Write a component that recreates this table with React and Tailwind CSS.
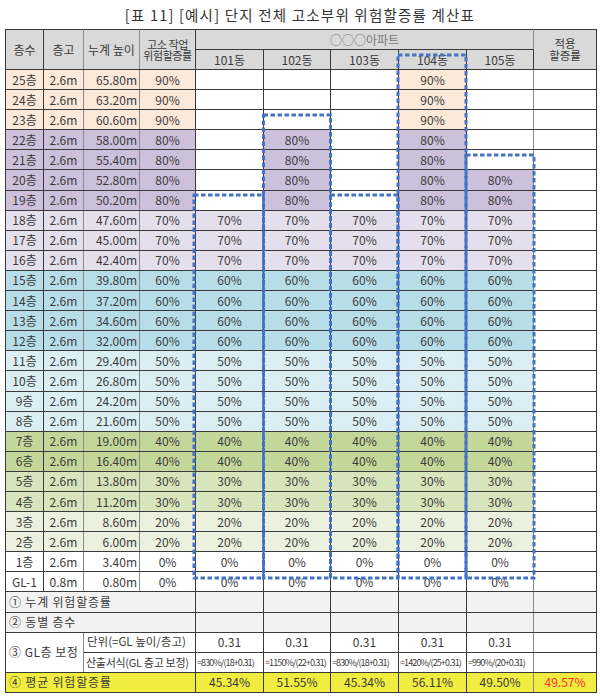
import React from "react";

const BAND = {
  90: "bg-[#fde9d9]",
  80: "bg-[#ccc0da]",
  70: "bg-[#e4dfec]",
  60: "bg-[#b7dee8]",
  50: "bg-[#daeef3]",
  40: "bg-[#c4d79b]",
  30: "bg-[#d8e4bc]",
  20: "bg-[#ebf1de]",
  0: "bg-white",
};

const riskOf = (f) => {
  if (f >= 23) return 90;
  if (f >= 19) return 80;
  if (f >= 16) return 70;
  if (f >= 12) return 60;
  if (f >= 8) return 50;
  if (f >= 6) return 40;
  if (f >= 4) return 30;
  if (f >= 2) return 20;
  return 0;
};

const heights = [18, 22, 18, 25, 20];

const floors = [];
for (let f = 25; f >= 1; f--) {
  floors.push({
    label: `${f}층`,
    h: "2.6m",
    cum: `${(0.8 + 2.6 * f).toFixed(2)}m`,
    risk: riskOf(f),
    f,
  });
}
floors.push({ label: "GL-1", h: "0.8m", cum: "0.80m", risk: 0, f: 0 });

const formulas = [
  "=830%/(18+0.31)",
  "=1150%/(22+0.31)",
  "=830%/(18+0.31)",
  "=1420%/(25+0.31)",
  "=990%/(20+0.31)",
];
const averages = ["45.34%", "51.55%", "45.34%", "56.11%", "49.50%"];

const cell = "border border-[#3a3a3a] p-0 leading-none whitespace-nowrap overflow-hidden";
const grayR = "border-r-[#8a8a8a]";

const boxes = [
  { x: 194, y: 195, w: 69.5, h: 383 },
  { x: 263.5, y: 115, w: 67, h: 463 },
  { x: 330.5, y: 195, w: 67.5, h: 383 },
  { x: 398, y: 55, w: 68, h: 523 },
  { x: 466, y: 155, w: 68, h: 423 },
];

export default function App() {
  return (
    <div
      className="relative w-[600px] h-[697px] overflow-hidden bg-white text-[#3b3b3b]"
      style={{ fontFamily: '"Noto Sans CJK KR", "Noto Sans", sans-serif' }}
    >
      <div className="h-[29px] flex items-center justify-center text-[14.5px] tracking-[1.2px] text-[#333]">
        [표 11] [예시] 단지 전체 고소부위 위험할증률 계산표
      </div>
      <table className="ml-[5px] w-[591px] table-fixed border-collapse text-[12px]">
        <colgroup>
          <col className="w-[38px]" />
          <col className="w-[40px]" />
          <col className="w-[56px]" />
          <col className="w-[56px]" />
          <col className="w-[68px]" />
          <col className="w-[67px]" />
          <col className="w-[68px]" />
          <col className="w-[68px]" />
          <col className="w-[67px]" />
          <col className="w-[63px]" />
        </colgroup>
        <thead>
          <tr className="h-[20px] bg-[#d9d9d9]">
            <th rowSpan={2} className={`${cell} font-normal text-center`}>층수</th>
            <th rowSpan={2} className={`${cell} ${grayR} font-normal text-center`}>층고</th>
            <th rowSpan={2} className={`${cell} ${grayR} font-normal text-center`}>누계 높이</th>
            <th rowSpan={2} className={`${cell} font-normal text-center text-[11px] tracking-[-0.4px] leading-[14px]`}>
              고소 작업
              <br />
              위험할증률
            </th>
            <th colSpan={5} className={`${cell} ${grayR} font-normal text-center text-[#7a7a7a]`}>○○○아파트</th>
            <th rowSpan={2} className={`${cell} font-normal text-center text-[11.5px] leading-[14px]`}>
              적용
              <br />
              할증률
            </th>
          </tr>
          <tr className="h-[20px] bg-[#d9d9d9]">
            {["101동", "102동", "103동", "104동", "105동"].map((b, i) => (
              <th key={b} className={`${cell} ${i === 4 ? grayR : ""} font-normal text-center`}>{b}</th>
            ))}
          </tr>
        </thead>
        <tbody>
          {floors.map((r) => {
            const bg = BAND[r.risk];
            return (
              <tr key={r.label} className="h-[20.1px]">
                <td className={`${cell} ${bg} text-center`}>{r.label}</td>
                <td className={`${cell} ${grayR} ${bg} text-center`}>{r.h}</td>
                <td className={`${cell} ${grayR} ${bg} text-right pr-[2px]`}>{r.cum}</td>
                <td className={`${cell} ${bg} text-center`}>{r.risk}%</td>
                {heights.map((hh, i) => {
                  const show = r.f <= hh;
                  return (
                    <td key={i} className={`${cell} ${i === 4 ? grayR : ""} ${show ? bg : "bg-white"} text-center`}>
                      {show ? `${r.risk}%` : ""}
                    </td>
                  );
                })}
                <td className={`${cell} bg-white`}></td>
              </tr>
            );
          })}
          {["① 누계 위험할증률", "② 동별 층수"].map((t) => (
            <tr key={t} className="h-[20.1px] bg-[#f2f2f2]">
              <td colSpan={4} className={`${cell} text-left pl-[3px] tracking-[0.8px]`}>{t}</td>
              {heights.map((_, i) => (
                <td key={i} className={`${cell} ${i === 4 ? grayR : ""}`}></td>
              ))}
              <td className={cell}></td>
            </tr>
          ))}
          <tr className="h-[20.1px] bg-white">
            <td colSpan={2} rowSpan={2} className={`${cell} ${grayR} text-left pl-[3px] tracking-[0.5px]`}>③ GL층 보정</td>
            <td colSpan={2} className={`${cell} text-left pl-[3px] text-[11.5px]`}>단위(=GL 높이/층고)</td>
            {heights.map((_, i) => (
              <td key={i} className={`${cell} ${i === 4 ? grayR : ""} text-center`}>0.31</td>
            ))}
            <td className={cell}></td>
          </tr>
          <tr className="h-[20.1px] bg-white">
            <td colSpan={2} className={`${cell} text-left pl-[2px] text-[11px] tracking-[-0.3px]`}>산출서식(GL 층고 보정)</td>
            {formulas.map((fm, i) => (
              <td key={i} className={`${cell} ${i === 4 ? grayR : ""} text-left pl-[1px] text-[9px] tracking-[-0.9px]`}>
                {fm}
              </td>
            ))}
            <td className={cell}></td>
          </tr>
          <tr className="h-[20.1px] bg-[#f1ec40]">
            <td colSpan={4} className={`${cell} text-left pl-[3px] tracking-[0.8px]`}>④ 평균 위험할증률</td>
            {averages.map((a, i) => (
              <td key={i} className={`${cell} ${i === 4 ? grayR : ""} text-center`}>{a}</td>
            ))}
            <td className={`${cell} text-center text-[#ff3030]`}>49.57%</td>
          </tr>
        </tbody>
      </table>
      <svg className="absolute inset-0 pointer-events-none" width="600" height="697">
        {boxes.map((b, i) => (
          <rect
            key={i}
            x={b.x}
            y={b.y}
            width={b.w}
            height={b.h}
            fill="none"
            stroke="#4472c4"
            strokeWidth="3"
            strokeDasharray="4.5 2.5"
          />
        ))}
      </svg>
    </div>
  );
}
